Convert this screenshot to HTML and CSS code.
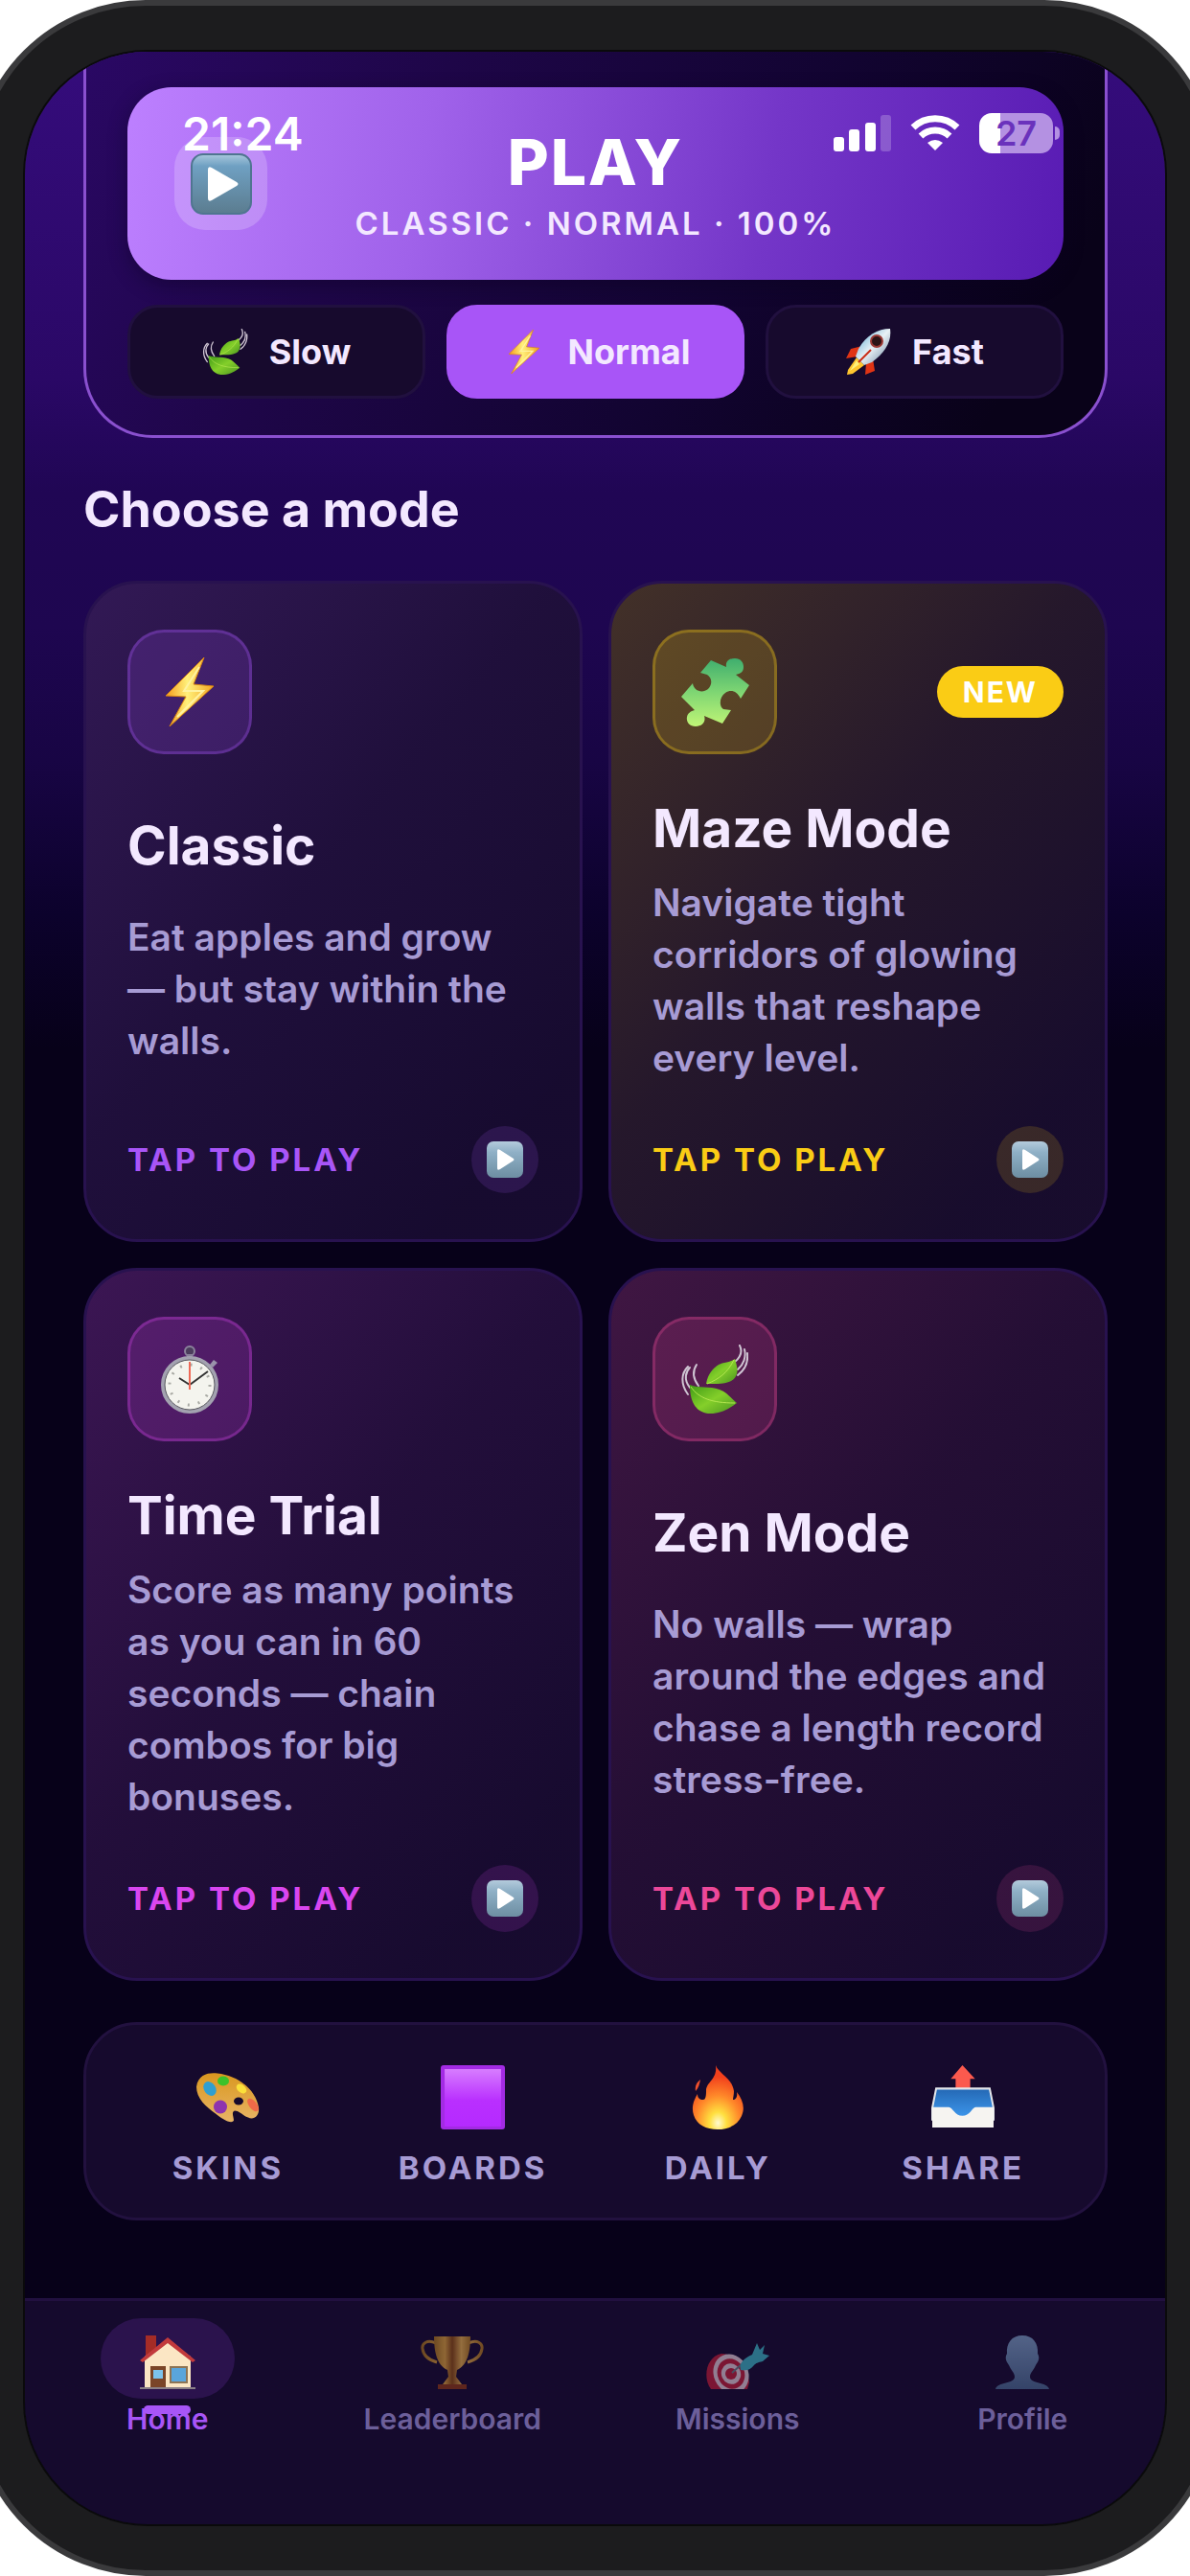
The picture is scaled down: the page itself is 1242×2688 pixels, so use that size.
FILE: index.html
```html
<!DOCTYPE html>
<html lang="en">
<head>
    <meta charset="UTF-8">
    <meta name="viewport" content="width=device-width, initial-scale=1.0">
    <title>Snake</title>
    <link rel="stylesheet" href="styles.css">
</head>
<body>
    <!-- icon sprite -->
    <svg class="sprite" aria-hidden="true">
        <defs>
            <linearGradient id="gPlay" x1="0" y1="0" x2="0" y2="1">
                <stop offset="0" stop-color="#a9c8dd"/><stop offset=".2" stop-color="#6fa0c2"/><stop offset="1" stop-color="#5b7c8f"/>
            </linearGradient>
            <linearGradient id="gPlaySmall" x1="0" y1="0" x2="0" y2="1">
                <stop offset="0" stop-color="#b4cbdc"/><stop offset=".3" stop-color="#8fb0c6"/><stop offset="1" stop-color="#6d8ea2"/>
            </linearGradient>
            <linearGradient id="gBolt" x1="0" y1="0" x2="1" y2="0">
                <stop offset="0" stop-color="#f59a1b"/><stop offset=".45" stop-color="#fff07a"/><stop offset="1" stop-color="#f3a321"/>
            </linearGradient>
            <linearGradient id="gPuzzle" x1="0" y1="0" x2="0" y2="1">
                <stop offset="0" stop-color="#3fae6e"/><stop offset=".5" stop-color="#7fd673"/><stop offset="1" stop-color="#c0f576"/>
            </linearGradient>
            <linearGradient id="gLeaf" x1="0" y1="0" x2="1" y2="1">
                <stop offset="0" stop-color="#3f9a16"/><stop offset=".5" stop-color="#84cf2a"/><stop offset="1" stop-color="#4a9420"/>
            </linearGradient>
            <linearGradient id="gRocket" x1="0" y1="0" x2="1" y2="1">
                <stop offset="0" stop-color="#4aa3cf"/><stop offset=".5" stop-color="#e9f1f5"/><stop offset="1" stop-color="#5f7f9c"/>
            </linearGradient>
            <linearGradient id="gSquare" x1="0" y1="0" x2="0" y2="1">
                <stop offset="0" stop-color="#d77dff"/><stop offset=".55" stop-color="#b92fff"/><stop offset="1" stop-color="#b52aff"/>
            </linearGradient>
            <linearGradient id="gPalette" x1="0" y1="0" x2="0" y2="1">
                <stop offset="0" stop-color="#d9971f"/><stop offset="1" stop-color="#e8b566"/>
            </linearGradient>
            <radialGradient id="gFire" cx=".5" cy=".9" r=".85">
                <stop offset="0" stop-color="#fffbd0"/><stop offset=".2" stop-color="#ffdf3f"/><stop offset=".5" stop-color="#ff8a2a"/><stop offset=".85" stop-color="#f2401c"/>
            </radialGradient>
            <linearGradient id="gTray" x1="0" y1="0" x2="0" y2="1">
                <stop offset="0" stop-color="#2468b4"/><stop offset="1" stop-color="#3f9af0"/>
            </linearGradient>
            <linearGradient id="gCup" x1="0" y1="0" x2="1" y2="0">
                <stop offset="0" stop-color="#a8741c"/><stop offset=".3" stop-color="#e0a43a"/><stop offset=".5" stop-color="#8a4a10"/><stop offset=".75" stop-color="#e8b04a"/><stop offset="1" stop-color="#b0781e"/>
            </linearGradient>
            <linearGradient id="gPerson" x1="0" y1="0" x2="0" y2="1">
                <stop offset="0" stop-color="#7d9fc4"/><stop offset="1" stop-color="#4a6a90"/>
            </linearGradient>
        </defs>

        <symbol id="i-play" viewBox="0 0 64 64">
            <rect x="1" y="1" width="62" height="62" rx="12" fill="url(#gPlay)" stroke="#4f7590" stroke-width="2"/>
            <path d="M18 17q0-4 4-2l26 15q3 2 0 4L22 49q-4 2-4-2z" fill="#fff"/>
        </symbol>
        <symbol id="i-go" viewBox="0 0 38 38">
            <rect width="38" height="38" rx="7" fill="url(#gPlaySmall)"/>
            <path d="M11 10q0-3 3-1l14 9q1 1 0 2l-14 9q-3 2-3-1z" fill="#fff"/>
        </symbol>
        <symbol id="i-bolt" viewBox="0 0 50 72">
            <path d="M40 0 29 28l21 2L4 72l17-31-21-1z" fill="url(#gBolt)" stroke="#d98512" stroke-width="1"/>
            <path d="M35 10 19 35h20L12 62" fill="none" stroke="#fff3a0" stroke-width="2"/>
        </symbol>
        <symbol id="i-leaf" viewBox="0 0 70 72">
            <g fill="none" stroke="#cfc5d3" stroke-width="2" stroke-linecap="round">
                <path d="M7 52C-1 41 0 30 7 23M9 45C2 36 5 28 9 24M18 43c-6-8-6-16-2-22"/>
                <path d="M61 1c3 6 1 12-5 17M66 5c2 8-1 16-7 21M69 9c1 9-2 17-10 23"/>
            </g>
            <path d="M9 42c10 4 20 1 31 5 8 3 12 9 18 14-8 6-18 12-30 11C14 70 9 58 9 42z" fill="url(#gLeaf)"/>
            <path d="M26 41c2-11 7-16 13-20 6-3 12-2 17-6 2 7 4 12 1 18-4 9-19 8-31 8z" fill="url(#gLeaf)"/>
            <path d="M10 44c8 12 22 17 46 17M27 41c12-5 21-11 28-25" fill="none" stroke="#b4e650" stroke-width="1"/>
        </symbol>
        <symbol id="i-rocket" viewBox="0 0 48 48">
            <path d="M18 18 6 21 1 31l12-2zM29 31l2 13-10 4 1-12z" fill="#e03414"/>
            <path d="M12 30 3 43l-1 5 6-1 12-9z" fill="#ffc52e"/>
            <path d="m12 33-7 11 10-7z" fill="#fff07a"/>
            <path d="M47 0c2 13-5 25-19 35l-8 3-9-9 3-8C22 7 34 0 47 0z" fill="url(#gRocket)"/>
            <circle cx="33" cy="13" r="6" fill="#2a1416" stroke="#9c3a35" stroke-width="2"/>
            <path d="m27 22-13 13" stroke="#c92c16" stroke-width="2"/>
        </symbol>
        <symbol id="i-puzzle" viewBox="0 0 71 71">
            <path d="M31 2 47 9C46 3 50 0 56 0s9 4 9 9-3 7-8 8l14 11-9 14c-4-8-10-10-16-6s-7 14-2 17l8 1-9 14-19-8c2 6-2 11-9 11S5 66 6 61c1-4 4-6 8-7L0 40l12-14c1 8 10 11 16 6 5-5 4-12-1-15l-7-2z" fill="url(#gPuzzle)"/>
        </symbol>
        <symbol id="i-watch" viewBox="0 0 61 71">
            <circle cx="30" cy="6" r="5" fill="#4b3d5c" stroke="#8b839c" stroke-width="2"/>
            <path d="M27 9h6v5h-6z" fill="#8b839c"/>
            <path d="m51 20 4-5 4 3-5 5z" fill="#9a92ab"/>
            <circle cx="30" cy="41" r="28" fill="#f4f4ee" stroke="#a3a2b0" stroke-width="4"/>
            <circle cx="30" cy="41" r="26" fill="none" stroke="#55555c" stroke-width="1"/>
            <circle cx="30" cy="41" r="21" fill="none" stroke="#a9aaa4" stroke-width="3" stroke-dasharray="2 9"/>
            <path d="M30 41 19 34M30 41l19-14" stroke="#333" stroke-width="2"/>
            <path d="M30 46V17" stroke="#ef6a57" stroke-width="2"/>
        </symbol>
        <symbol id="i-palette" viewBox="0 0 66 66">
            <path d="M0 22C2 8 14 7 22 8c20 2 40 16 43 36 1 8-5 13-11 10-6-2-9-7-14-7-4 1-1 7-1 10-2 5-13-2-19-7C10 43 0 34 0 22z" fill="url(#gPalette)"/>
            <ellipse cx="14" cy="24" rx="6" ry="8" transform="rotate(-35 14 24)" fill="#2f9fd0"/>
            <ellipse cx="28" cy="16" rx="6" ry="5" fill="#3cc22a"/>
            <ellipse cx="47" cy="24" rx="4" ry="6" transform="rotate(-50 47 24)" fill="#fbe03a"/>
            <ellipse cx="59" cy="41" rx="4" ry="8" transform="rotate(-38 59 41)" fill="#ef6a48"/>
            <ellipse cx="25" cy="43" rx="7" ry="7" fill="#8e34ae"/>
            <ellipse cx="44" cy="37" rx="5" ry="4" fill="#160a2c"/>
        </symbol>
        <symbol id="i-square" viewBox="0 0 66 66">
            <rect x="0" y="0" width="66" height="66" rx="3" fill="#a32be4"/>
            <rect x="4" y="4" width="58" height="59" fill="url(#gSquare)"/>
        </symbol>
        <symbol id="i-fire" viewBox="0 0 52 67">
            <path d="M24 0c3 9 17 13 19 27 0 4-1 7-1 9 3 0 5-3 4-8 6 8 9 16 5 25-4 9-13 14-25 14S4 62 1 52c-3-9 1-17 4-22 0 4 2 6 6 6 2 0 3-3 3-9C14 17 26 15 24 0z" fill="url(#gFire)"/>
            <path d="M8 15c-1 5-2 9-5 12-1-5 1-9 5-12z" fill="#f2502c"/>
        </symbol>
        <symbol id="i-outbox" viewBox="0 0 65 66">
            <path d="M32 0 45 14h-5v10H25V14h-5z" fill="#fb5a4e"/>
            <path d="M5 24h55l4 20v12H1V44z" fill="url(#gTray)" stroke="#e4e6ea" stroke-width="2"/>
            <path d="M1 43h17c4 0 6 9 14 9s10-9 14-9h18v21H1z" fill="#f6f4f1"/>
        </symbol>
        <symbol id="i-house" viewBox="0 0 58 56">
            <path d="M6 0h11v16L6 22z" fill="#a52c26"/>
            <path d="M5 22 29 5l24 17v32H5z" fill="#fbe6c4"/>
            <path d="M0 26 29 2l29 24-3 2L29 8 3 28z" fill="#c23a3c"/>
            <rect x="11" y="32" width="16" height="22" fill="#7a4528"/>
            <rect x="14" y="36" width="10" height="9" fill="#7cc2ec"/>
            <rect x="32" y="33" width="17" height="16" fill="#5aa5dc" stroke="#8d7455" stroke-width="2"/>
            <path d="M0 54h58v2H0z" fill="#8a7f86"/>
        </symbol>
        <symbol id="i-trophy" viewBox="0 0 66 56">
            <path d="M16 8C7 4 1 8 2 14c1 8 8 12 15 14M50 8c9-4 15 0 14 6-1 8-8 12-15 14" fill="none" stroke="url(#gCup)" stroke-width="3"/>
            <path d="M14 1h38c0 16-3 30-14 35l-1 7 6 8H23l6-8-1-7C17 31 14 17 14 1z" fill="url(#gCup)"/>
            <path d="M18 51h30v5H18z" fill="#8f3a14"/>
        </symbol>
        <symbol id="i-target" viewBox="0 0 66 48">
            <path d="M5 48C-4 36 0 14 16 11c16 0 28 18 29 30l-2 7z" fill="#c01f38"/>
            <ellipse cx="26" cy="32" rx="18" ry="21" transform="rotate(-25 26 32)" fill="#e4ccd6"/>
            <ellipse cx="26" cy="32" rx="14" ry="16" transform="rotate(-25 26 32)" fill="#c01f38"/>
            <ellipse cx="26" cy="32" rx="10" ry="11" transform="rotate(-25 26 32)" fill="#e4ccd6"/>
            <ellipse cx="26" cy="32" rx="6" ry="6" fill="#c01f38"/>
            <path d="m27 31 10-9" stroke="#6c7b84" stroke-width="2"/>
            <path d="M36 28c-2-7 3-12 12-16l5-12 3 7 5-5-2 9 7 2-7 6c-5 1-7 2-9 4-4 5-8 6-14 5z" fill="#3cb5c4"/>
        </symbol>
        <symbol id="i-person" viewBox="0 0 56 56">
            <path d="M28 0c11 0 17 8 16 19 3 5 0 9-2 12-2 5-6 8-6 12 0 8 18 5 20 13H0c2-8 20-5 20-13 0-4-4-7-6-12-2-3-5-7-2-12C11 8 17 0 28 0z" fill="url(#gPerson)"/>
        </symbol>
    </svg>

    <div class="phone">
        <div class="screen">
            <div class="status-bar">
                <span class="time">21:24</span>
                <div class="status-icons">
                    <svg width="60" height="38" viewBox="0 0 60 38" fill="#fff">
                        <rect x="0" y="23" width="11" height="15" rx="3"/>
                        <rect x="16" y="15" width="11" height="23" rx="3"/>
                        <rect x="33" y="8" width="11" height="30" rx="3"/>
                        <rect x="49" y="0" width="11" height="38" rx="3" opacity=".22"/>
                    </svg>
                    <svg width="52" height="38" viewBox="0 0 52 38" fill="none" stroke="#fff" stroke-width="7">
                        <path d="M3 13a33 33 0 0 1 46 0"/>
                        <path d="M11 22a22 22 0 0 1 30 0"/>
                        <path d="M18 29q8-6 16 0l-8 8z" fill="#fff" stroke="none"/>
                    </svg>
                    <span class="battery">27</span>
                </div>
            </div>

            <main class="content">
                <section class="hero">
                    <button class="play-btn">
                        <span class="play-icon"><svg width="64" height="64"><use href="#i-play"/></svg></span>
                        <span class="play-text">
                            <span class="play-title">PLAY</span>
                            <span class="play-sub">CLASSIC · NORMAL · 100%</span>
                        </span>
                    </button>
                    <div class="speeds">
                        <button class="speed"><svg width="48" height="48"><use href="#i-leaf"/></svg>Slow</button>
                        <button class="speed active"><svg width="48" height="46"><use href="#i-bolt"/></svg>Normal</button>
                        <button class="speed"><svg width="48" height="48"><use href="#i-rocket"/></svg>Fast</button>
                    </div>
                </section>

                <h2 class="section-title">Choose a mode</h2>

                <div class="modes">
                    <a href="#" class="mode classic">
                        <div class="mode-head">
                            <span class="mode-icon"><svg width="72" height="72"><use href="#i-bolt"/></svg></span>
                        </div>
                        <h3>Classic</h3>
                        <p>Eat apples and grow —&nbsp;but stay within the walls.</p>
                        <div class="mode-foot">
                            <span>TAP TO PLAY</span>
                            <span class="go"><svg width="38" height="38"><use href="#i-go"/></svg></span>
                        </div>
                    </a>
                    <a href="#" class="mode maze">
                        <div class="mode-head">
                            <span class="mode-icon"><svg width="71" height="71"><use href="#i-puzzle"/></svg></span>
                            <span class="badge">NEW</span>
                        </div>
                        <h3>Maze Mode</h3>
                        <p>Navigate tight corridors of glowing walls that reshape every level.</p>
                        <div class="mode-foot">
                            <span>TAP TO PLAY</span>
                            <span class="go"><svg width="38" height="38"><use href="#i-go"/></svg></span>
                        </div>
                    </a>
                    <a href="#" class="mode trial">
                        <div class="mode-head">
                            <span class="mode-icon"><svg width="61" height="71"><use href="#i-watch"/></svg></span>
                        </div>
                        <h3>Time Trial</h3>
                        <p>Score as many points as you can in 60 seconds — chain combos for big bonuses.</p>
                        <div class="mode-foot">
                            <span>TAP TO PLAY</span>
                            <span class="go"><svg width="38" height="38"><use href="#i-go"/></svg></span>
                        </div>
                    </a>
                    <a href="#" class="mode zen">
                        <div class="mode-head">
                            <span class="mode-icon"><svg width="70" height="72"><use href="#i-leaf"/></svg></span>
                        </div>
                        <h3>Zen Mode</h3>
                        <p>No walls — wrap around the edges and chase a length record stress-free.</p>
                        <div class="mode-foot">
                            <span>TAP TO PLAY</span>
                            <span class="go"><svg width="38" height="38"><use href="#i-go"/></svg></span>
                        </div>
                    </a>
                </div>

                <div class="quick">
                    <button><svg width="66" height="67"><use href="#i-palette"/></svg>SKINS</button>
                    <button><svg width="67" height="67"><use href="#i-square"/></svg>BOARDS</button>
                    <button><svg width="66" height="67"><use href="#i-fire"/></svg>DAILY</button>
                    <button><svg width="66" height="67"><use href="#i-outbox"/></svg>SHARE</button>
                </div>
            </main>

            <nav class="tabs">
                <a href="#" class="tab active">
                    <span class="tab-icon"><svg width="58" height="56"><use href="#i-house"/></svg></span>
                    Home
                </a>
                <a href="#" class="tab">
                    <span class="tab-icon"><svg width="66" height="56"><use href="#i-trophy"/></svg></span>
                    Leaderboard
                </a>
                <a href="#" class="tab">
                    <span class="tab-icon"><svg width="66" height="48"><use href="#i-target"/></svg></span>
                    Missions
                </a>
                <a href="#" class="tab">
                    <span class="tab-icon"><svg width="56" height="56"><use href="#i-person"/></svg></span>
                    Profile
                </a>
            </nav>
        </div>
    </div>
</body>
</html>
```

FILE: styles.css
```css
* {
    box-sizing: border-box;
}
body {
    margin: 0;
    background: #fff;
    font-family: Inter, "Liberation Sans", sans-serif;
    color: #f3e8ff;
    overflow-x: hidden;
}
button {
    font-family: inherit;
    color: inherit;
    border: none;
    cursor: pointer;
}
a {
    color: inherit;
    text-decoration: none;
}
svg {
    display: block;
}
.sprite {
    position: absolute;
    width: 0;
    height: 0;
}

/* device frame, runs a little past the window on both sides */
.phone {
    display: flex;
    min-height: 100vh;
    margin: 0 -28px;
    padding: 48px;
    border: 6px solid #3a3a3c;
    border-radius: 180px;
    background: #1c1c1e;
}
.screen {
    position: relative;
    flex: 1;
    display: flex;
    flex-direction: column;
    overflow: hidden;
    border-radius: 128px;
    background: linear-gradient(180deg, #350c7c 0, #2a0866 340px, #200654 460px, #1e0650 600px, #180544 740px, #0c022c 900px, #070119 1040px);
    box-shadow: 0 0 0 2px #0a0a0b;
}

/* status bar floats over the page */
.status-bar {
    position: absolute;
    top: 64px;
    left: 0;
    right: 0;
    z-index: 2;
    display: flex;
    align-items: center;
    justify-content: space-between;
    height: 42px;
    padding: 0 117px 0 164px;
    color: #fff;
}
.time {
    font-size: 48px;
    font-weight: 600;
}
.status-icons {
    display: flex;
    align-items: center;
    gap: 20px;
}
.battery {
    position: relative;
    width: 77px;
    height: 42px;
    border-radius: 13px;
    background: linear-gradient(90deg, #fff 28%, #b491e2 28%);
    color: #6a32bc;
    font-size: 36px;
    font-weight: 600;
    line-height: 42px;
    text-align: center;
}
.battery::after {
    content: "";
    position: absolute;
    top: 14px;
    right: -7px;
    width: 5px;
    height: 14px;
    border-radius: 0 6px 6px 0;
    background: #b491e2;
}

.content {
    flex: 1;
    padding: 0 60px 80px 61px;
}

/* hero */
.hero {
    padding: 37px 43px 38px;
    border: 3px solid #8a50cf;
    border-top: none;
    border-radius: 0 0 72px 72px;
    background: linear-gradient(120deg, #2a0864 0%, #1e0648 30%, #120431 62%, #090219 90%);
}
.play-btn {
    display: grid;
    grid-template-columns: 97px 1fr 97px;
    align-items: center;
    width: 100%;
    height: 201px;
    padding: 0 49px;
    border-radius: 46px;
    background: linear-gradient(100deg, #bd80ff 0%, #a062ea 32%, #7436c8 68%, #581bb3 100%);
    box-shadow: 0 6px 20px rgba(10, 0, 30, 0.4);
}
.play-icon {
    display: flex;
    align-items: center;
    justify-content: center;
    height: 97px;
    border-radius: 32px;
    background: rgba(255, 255, 255, 0.2);
}
.play-text {
    display: flex;
    flex-direction: column;
    align-items: center;
    gap: 3px;
}
.play-title {
    color: #fff;
    font-size: 66px;
    font-weight: 800;
    line-height: 80px;
    letter-spacing: 2px;
}
.play-sub {
    font-size: 33px;
    font-weight: 600;
    line-height: 42px;
    letter-spacing: 3px;
    white-space: nowrap;
}
.speeds {
    display: grid;
    grid-template-columns: repeat(3, 1fr);
    gap: 22px;
    margin-top: 26px;
}
.speed {
    display: flex;
    align-items: center;
    justify-content: center;
    gap: 22px;
    height: 98px;
    border: 3px solid #21103f;
    border-radius: 32px;
    background: #170a2d;
    font-size: 36px;
    font-weight: 700;
}
.speed.active {
    border-color: #a855f7;
    background: #a855f7;
}

.section-title {
    margin: 43px 0;
    font-size: 52px;
    font-weight: 700;
    line-height: 63px;
}

/* mode cards */
.modes {
    display: grid;
    grid-template-columns: repeat(2, 1fr);
    gap: 27px;
}
.mode {
    display: flex;
    flex-direction: column;
    justify-content: space-between;
    gap: 18px;
    padding: 48px 43px;
    border: 3px solid #28124f;
    border-radius: 56px;
    --accent: 168, 85, 247;
    background: linear-gradient(130deg, rgba(var(--accent), 0.2), rgba(var(--accent), 0.07) 45%, rgba(var(--accent), 0.01) 85%), #150a2d;
}
.maze {
    --accent: 250, 204, 21;
}
.trial {
    --accent: 217, 70, 239;
}
.zen {
    --accent: 236, 72, 153;
}
.mode-head {
    display: flex;
    align-items: center;
    justify-content: space-between;
    margin-bottom: 26px;
}
.mode-icon {
    display: flex;
    align-items: center;
    justify-content: center;
    width: 130px;
    height: 130px;
    border: 3px solid rgba(var(--accent), 0.3);
    border-radius: 38px;
    background: rgba(var(--accent), 0.18);
}
.badge {
    padding: 0 27px;
    border-radius: 27px;
    background: #facc15;
    color: #fff;
    font-size: 30px;
    font-weight: 700;
    line-height: 54px;
    letter-spacing: 2px;
}
.mode h3 {
    margin: 0;
    font-size: 55px;
    font-weight: 700;
    line-height: 66px;
}
.mode p {
    margin: 0 0 26px;
    color: #a79bd4;
    font-size: 39px;
    font-weight: 600;
    line-height: 54px;
}
.mode-foot {
    display: flex;
    align-items: center;
    justify-content: space-between;
    color: rgb(var(--accent));
    font-size: 33px;
    font-weight: 700;
    letter-spacing: 3px;
}
.go {
    display: flex;
    align-items: center;
    justify-content: center;
    width: 70px;
    height: 70px;
    border-radius: 50%;
    background: rgba(var(--accent), 0.15);
}

/* quick actions */
.quick {
    display: grid;
    grid-template-columns: repeat(4, 1fr);
    margin-top: 43px;
    padding: 42px 20px 31px;
    border: 3px solid #22113f;
    border-radius: 56px;
    background: #160a2d;
}
.quick button {
    display: flex;
    flex-direction: column;
    align-items: center;
    gap: 19px;
    padding: 0;
    background: none;
    color: #a79bd4;
    font-size: 33px;
    font-weight: 700;
    line-height: 42px;
    letter-spacing: 3px;
}

/* bottom tabs */
.tabs {
    display: grid;
    grid-template-columns: repeat(4, 1fr);
    padding: 18px 0 92px;
    border-top: 3px solid #21103f;
    background: #150a2d;
}
.tab {
    position: relative;
    display: flex;
    flex-direction: column;
    align-items: center;
    gap: 3px;
    color: #6c5f9a;
    font-size: 30px;
    font-weight: 600;
    line-height: 36px;
}
.tab-icon {
    display: flex;
    align-items: flex-end;
    justify-content: center;
    width: 140px;
    height: 84px;
    padding-bottom: 10px;
    border-radius: 42px;
}
.tab-icon svg {
    opacity: 0.6;
}
.tab.active {
    color: #a855f7;
}
.tab.active .tab-icon {
    background: #2b134d;
}
.tab.active .tab-icon svg {
    opacity: 1;
}
.tab.active::after {
    content: "";
    position: absolute;
    top: 91px;
    width: 49px;
    height: 9px;
    border-radius: 5px;
    background: #a855f7;
}
```
